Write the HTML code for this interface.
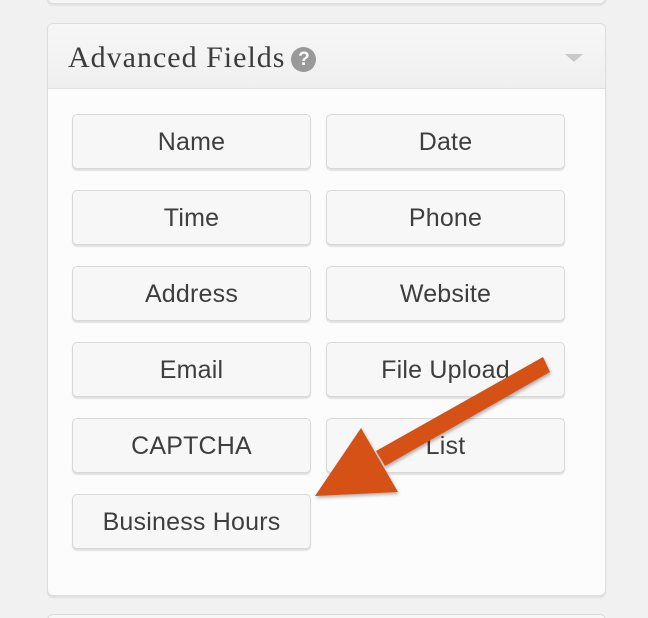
<!DOCTYPE html>
<html><head><style>
html,body{margin:0;width:648px;height:618px;overflow:hidden}
body{background:#f1f1f1;position:relative;font-family:"Liberation Sans",sans-serif}
.prev{position:absolute;left:47px;top:-10px;width:557px;height:12px;background:#f5f5f5;border:1px solid #dcdcdc;border-radius:6px;box-shadow:0 2px 1px #e2e2e2}
.next{position:absolute;left:47px;top:614px;width:557px;height:30px;background:#f7f7f7;border:1px solid #dcdcdc;border-radius:6px}
.panel{position:absolute;left:47px;top:23px;width:557px;height:571px;background:#fcfcfc;border:1px solid #dedede;border-radius:6px;box-shadow:0 2px 1px #e0e0e0}
.hdr{height:64px;background:linear-gradient(#f7f7f7,#efefef);border-bottom:1px solid #e0e0e0;border-radius:6px 6px 0 0;position:relative}
.hdr h3{margin:0;position:absolute;left:20px;top:17px;font-family:"Liberation Serif",serif;font-weight:normal;font-size:30px;letter-spacing:1px;color:#3c3c3c;white-space:nowrap}
.q{display:inline-block;width:25px;height:25px;border-radius:50%;background:#999;color:#fff;font-family:"Liberation Sans",sans-serif;font-weight:bold;font-size:19px;line-height:25px;text-align:center;vertical-align:2px;margin-left:6px;letter-spacing:0}
.caret{position:absolute;right:22px;top:30px;width:0;height:0;border-left:9px solid transparent;border-right:9px solid transparent;border-top:8px solid #c8c8c8}
.b{position:absolute;width:237px;height:53px;background:#f7f7f7;border:1px solid #d8d8d8;border-radius:5px;box-shadow:0 2px 1px #e2e2e2;font-size:25px;letter-spacing:0.2px;color:#3e3e3e;text-align:center;line-height:54px}
</style></head><body>
<div class="prev"></div>
<div class="next"></div>
<div class="panel"><div class="hdr"><h3>Advanced Fields<span class="q">?</span></h3><div class="caret"></div></div></div>
<div class="b" style="left:72px;top:114px">Name</div>
<div class="b" style="left:326px;top:114px">Date</div>
<div class="b" style="left:72px;top:190px">Time</div>
<div class="b" style="left:326px;top:190px">Phone</div>
<div class="b" style="left:72px;top:266px">Address</div>
<div class="b" style="left:326px;top:266px">Website</div>
<div class="b" style="left:72px;top:342px">Email</div>
<div class="b" style="left:326px;top:342px">File Upload</div>
<div class="b" style="left:72px;top:418px">CAPTCHA</div>
<div class="b" style="left:326px;top:418px">List</div>
<div class="b" style="left:72px;top:494px">Business Hours</div>
<svg style="position:absolute;left:0;top:0" width="648" height="618">
<defs><filter id="s"><feDropShadow dx="1" dy="2" stdDeviation="1.5" flood-color="#000" flood-opacity="0.3"/></filter></defs>
<g filter="url(#s)" fill="#d55119">
<polygon points="543,357 550,372 385,466 376,451"/>
<polygon points="361,428 398,492 315,496"/>
</g>
</svg>
</body></html>
